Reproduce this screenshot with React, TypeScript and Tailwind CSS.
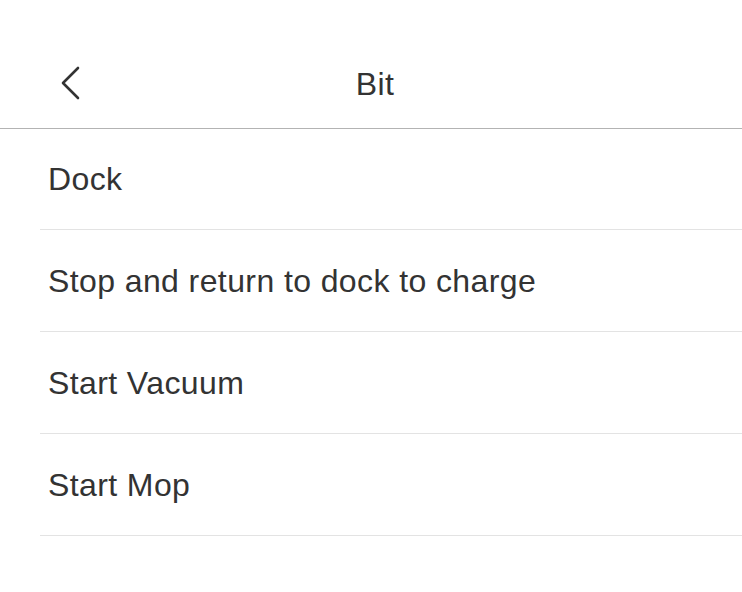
import React from 'react';

const actions = ['Dock', 'Stop and return to dock to charge', 'Start Vacuum', 'Start Mop'];

export default function App() {
  return (
    <div className="min-h-[592px] w-[742px] bg-white text-[#333333]" style={{ fontFamily: '"Liberation Sans", Arial, sans-serif' }}>
      <header className="relative flex h-[129px] items-center justify-center border-b border-[#b3b3b3]">
        <button className="absolute left-[57px] top-[64px] flex h-[38px] w-[26px] items-center justify-center">
          <svg width="22" height="34" viewBox="0 0 22 34" fill="none">
            <path d="M19 2 L4 17 L19 32" stroke="#333333" strokeWidth="2.6" strokeLinecap="round" strokeLinejoin="round" />
          </svg>
        </button>
        <h1 className="ml-[8px] mt-[40px] text-[32px] font-normal tracking-[0.4px]">Bit</h1>
      </header>
      <ul className="pl-[40px]">
        {actions.map((a) => (
          <li key={a} className="flex h-[102px] items-center border-b border-[#e3e3e3] pl-[8px] text-[32px] tracking-[0.4px] first:h-[101px]">
            {a}
          </li>
        ))}
      </ul>
    </div>
  );
}
